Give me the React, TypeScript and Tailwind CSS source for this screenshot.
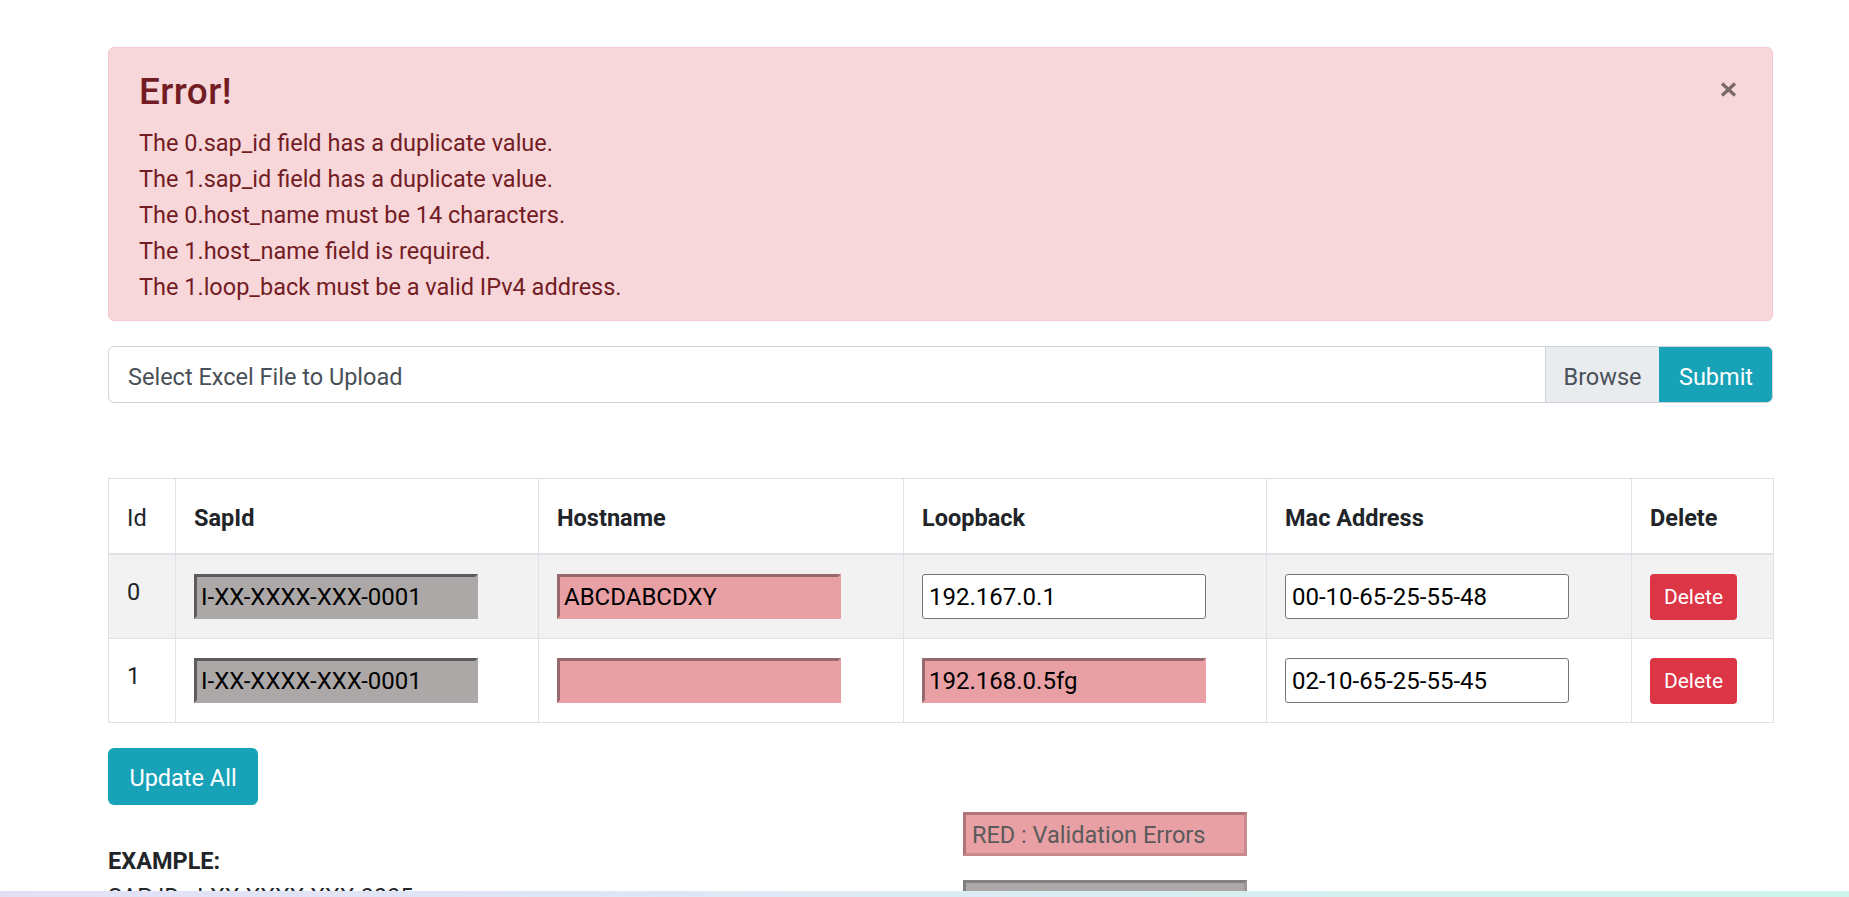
import { useState } from 'react'

interface Row {
  id: number
  sapId: string
  hostname: string
  loopback: string
  mac: string
  errors: { hostname?: boolean; loopback?: boolean }
}

const rows: Row[] = [
  { id: 0, sapId: 'I-XX-XXXX-XXX-0001', hostname: 'ABCDABCDXY', loopback: '192.167.0.1', mac: '00-10-65-25-55-48', errors: { hostname: true } },
  { id: 1, sapId: 'I-XX-XXXX-XXX-0001', hostname: '', loopback: '192.168.0.5fg', mac: '02-10-65-25-55-45', errors: { hostname: true, loopback: true } },
]

const messages = [
  'The 0.sap_id field has a duplicate value.',
  'The 1.sap_id field has a duplicate value.',
  'The 0.host_name must be 14 characters.',
  'The 1.host_name field is required.',
  'The 1.loop_back must be a valid IPv4 address.',
]

const greyInput =
  'w-[284px] h-[45px] px-[4px] pt-[2px] bg-[#aca8a7] border-[3px] border-t-[#5d5b5b] border-l-[#5d5b5b] border-r-[#aca8a7] border-b-[#aca8a7] text-black text-[24px] outline-none'
const redInput =
  'w-[284px] h-[45px] px-[4px] pt-[2px] bg-[#e8a0a5] border-[3px] border-t-[#98696c] border-l-[#98696c] border-r-[#e8a0a5] border-b-[#e8a0a5] text-black text-[24px] outline-none'
const plainInput =
  'w-[284px] h-[45px] px-[6px] pt-[2px] bg-white border border-[#767676] rounded-[3px] text-black text-[24px] outline-none'

const Cell = ({ children, className = '' }: { children?: React.ReactNode; className?: string }) => (
  <td className={`border border-[#dee2e6] px-[18px] py-[18px] align-middle ${className}`}>
    <div className="h-[47px] flex items-start pt-[1px]">{children}</div>
  </td>
)

const Th = ({ children, bold = true }: { children: React.ReactNode; bold?: boolean }) => (
  <th className={`border border-b-2 border-[#dee2e6] px-[18px] pt-[5px] text-left ${bold ? 'font-bold' : 'font-normal'}`}>
    {children}
  </th>
)

export default function App() {
  const [data] = useState(rows)

  return (
    <div className="h-[897px] overflow-hidden flex flex-col bg-white text-[#212529] text-[23.5px] leading-[36px] font-[Roboto,'Liberation_Sans',sans-serif]">
      <div className="flex-1 overflow-hidden pl-[108px] pt-[47px]">
        <div className="w-[1665px]">
          {/* alert */}
          <div className="flex bg-[#f8d7da] border border-[#f5c6cb] rounded-[6px] text-[#721c24] px-[30px] pt-[22px] pb-[15px]">
            <div className="flex-1">
              <h4 className="text-[37px] leading-[43px] font-medium tracking-[0.4px] mb-[12px]">Error!</h4>
              {messages.map((m) => (
                <p key={m}>{m}</p>
              ))}
            </div>
            <svg width="17" height="15" viewBox="0 0 17 15" className="mt-[12px] mr-[5px] shrink-0">
              <path d="M2 1.5 L15 13.5 M15 1.5 L2 13.5" stroke="#7a6869" strokeWidth="3.2" />
            </svg>
          </div>

          {/* upload */}
          <div className="mt-[25px] flex h-[57px] border border-[#ced4da] rounded-[6px] overflow-hidden">
            <div className="flex-1 flex items-center px-[19px] pt-[4px] text-[#495057]">Select Excel File to Upload</div>
            <div className="w-[114px] flex items-center justify-center pt-[4px] bg-[#e9ecef] border-l border-[#ced4da] text-[#495057]">
              Browse
            </div>
            <div className="w-[114px] -my-px -mr-px flex items-center justify-center pt-[4px] bg-[#17a2b8] text-white">
              Submit
            </div>
          </div>

          {/* table */}
          <table className="mt-[75px] w-[1665px] table-fixed border-collapse border border-[#dee2e6]">
            <colgroup>
              <col className="w-[67px]" />
              <col className="w-[363px]" />
              <col className="w-[365px]" />
              <col className="w-[363px]" />
              <col className="w-[365px]" />
              <col className="w-[142px]" />
            </colgroup>
            <thead>
              <tr className="h-[75px]">
                <Th bold={false}>Id</Th>
                <Th>SapId</Th>
                <Th>Hostname</Th>
                <Th>Loopback</Th>
                <Th>Mac Address</Th>
                <Th>Delete</Th>
              </tr>
            </thead>
            <tbody>
              {data.map((r, i) => (
                <tr key={r.id} className={i % 2 === 0 ? 'bg-[#f2f2f2]' : 'bg-white'}>
                  <Cell>
                    <span>{r.id}</span>
                  </Cell>
                  <Cell>
                    <input className={greyInput} defaultValue={r.sapId} readOnly />
                  </Cell>
                  <Cell>
                    <input className={r.errors.hostname ? redInput : plainInput} defaultValue={r.hostname} />
                  </Cell>
                  <Cell>
                    <input className={r.errors.loopback ? redInput : plainInput} defaultValue={r.loopback} />
                  </Cell>
                  <Cell>
                    <input className={plainInput} defaultValue={r.mac} />
                  </Cell>
                  <Cell>
                    <button className="h-[46px] w-[87px] pt-[1px] bg-[#dc3545] text-white text-[21px] rounded-[4px]">Delete</button>
                  </Cell>
                </tr>
              ))}
            </tbody>
          </table>

          <button className="mt-[25px] h-[57px] w-[150px] pt-[3px] bg-[#17a2b8] text-white rounded-[6px]">Update All</button>

          {/* example + legend */}
          <div className="flex">
            <div className="w-[855px] pt-[38px]">
              <p className="font-bold">EXAMPLE:</p>
              <p>SAP ID : I-XX-XXXX-XXX-0005</p>
            </div>
            <div className="flex-1 pt-[7px] flex flex-col gap-[24px]">
              <div className="w-[284px] h-[44px] flex items-center px-[6px] pt-[3px] bg-[#e8a0a5] border-[3px] border-t-[#ae7579] border-l-[#ae7579] border-r-[#c98a8f] border-b-[#c98a8f] text-[#5a5a5a]">
                RED : Validation Errors
              </div>
              <div className="w-[284px] h-[44px] flex items-center px-[6px] pt-[3px] bg-[#aca8a7] border-[3px] border-t-[#808080] border-l-[#808080] border-r-[#9a9696] border-b-[#9a9696] text-[#5a5a5a]">
                GREY : Duplicate Values
              </div>
            </div>
          </div>
        </div>
      </div>
      <div className="h-[6px] shrink-0 bg-gradient-to-r from-[#e3e0f6] via-[#dcebf4] to-[#cdf4ea]" />
    </div>
  )
}
